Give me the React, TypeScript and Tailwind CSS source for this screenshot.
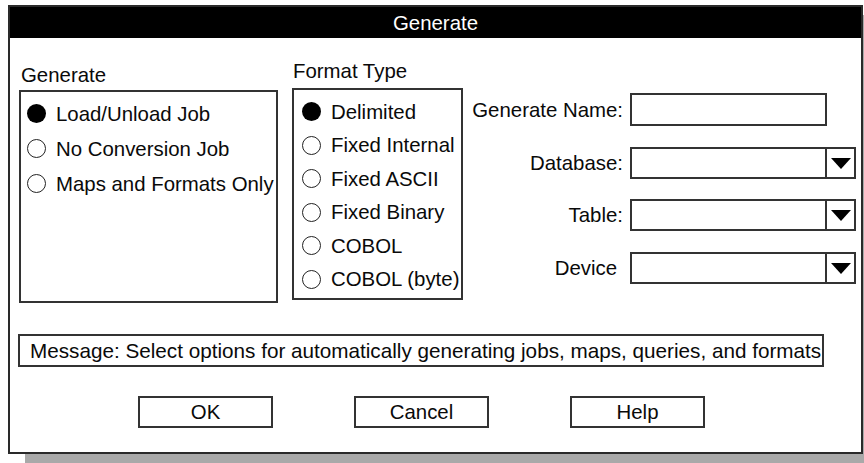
import React from "react";

const font = { fontFamily: '"Liberation Sans", Arial, sans-serif' };

function Radio({ label, checked }: { label: string; checked?: boolean }) {
  return (
    <div className="flex items-center gap-[10px] whitespace-nowrap">
      <span
        className={
          checked
            ? "w-[19px] h-[19px] rounded-full bg-black shrink-0"
            : "w-[19px] h-[19px] rounded-full border-[1.5px] border-[#222] bg-white shrink-0"
        }
      />
      <span>{label}</span>
    </div>
  );
}

function Select() {
  return (
    <div className="flex w-[226px] h-[32px] border-2 border-[#333] bg-white">
      <div className="flex-1" />
      <div className="w-[29px] border-l-2 border-[#333] flex items-center justify-center">
        <svg width="20" height="11" viewBox="0 0 20 11">
          <polygon points="0,0 20,0 10,11" fill="#000" />
        </svg>
      </div>
    </div>
  );
}

function Button({ label }: { label: string }) {
  return (
    <div className="w-[135px] h-[32px] border-2 border-[#333] flex items-center justify-center">
      {label}
    </div>
  );
}

export default function App() {
  return (
    <div
      className="w-[864px] h-[463px] bg-white overflow-hidden pl-[8px] pt-[5px] text-[20.4px] leading-[24px] text-[#0a0a0a]"
      style={font}
    >
      <div className="w-[855px] h-[449px] border-2 border-[#2a2a2a] bg-white shadow-[17px_10px_0_#a9a9a9] flex flex-col">
        <div className="h-[31px] bg-black text-white flex items-center justify-center">
          Generate
        </div>

        <div className="flex items-start">
          {/* Generate group */}
          <div className="ml-[9px] mt-[25px]">
            <div className="mb-[3px] pl-[2px]">Generate</div>
            <div className="w-[259px] h-[213px] border-2 border-[#333] pt-[4px] pl-[6px]">
              <div className="h-[35px] flex items-center">
                <Radio label="Load/Unload Job" checked />
              </div>
              <div className="h-[35px] flex items-center">
                <Radio label="No Conversion Job" />
              </div>
              <div className="h-[35px] flex items-center">
                <Radio label="Maps and Formats Only" />
              </div>
            </div>
          </div>

          {/* Format type group */}
          <div className="ml-[14px] mt-[21px]">
            <div className="mb-[5px] pl-[1px]">Format Type</div>
            <div className="w-[171px] h-[212px] border-2 border-[#333] pt-[5px] pl-[8px]">
              {[
                ["Delimited", true],
                ["Fixed Internal", false],
                ["Fixed ASCII", false],
                ["Fixed Binary", false],
                ["COBOL", false],
                ["COBOL (byte)", false],
              ].map(([l, c]) => (
                <div key={l as string} className="h-[33.5px] flex items-center">
                  <Radio label={l as string} checked={c as boolean} />
                </div>
              ))}
            </div>
          </div>

          {/* Fields */}
          <div className="ml-px mt-[55px] w-[392px] flex flex-col">
            <div className="flex items-center gap-[7px]">
              <div className="w-[159px] text-right whitespace-nowrap">Generate Name:</div>
              <div className="w-[197px] h-[33px] border-2 border-[#333]" />
            </div>
            <div className="flex items-center gap-[7px] mt-[21px]">
              <div className="w-[159px] text-right">Database:</div>
              <Select />
            </div>
            <div className="flex items-center gap-[7px] mt-[20px]">
              <div className="w-[159px] text-right">Table:</div>
              <Select />
            </div>
            <div className="flex items-center gap-[7px] mt-[21px]">
              <div className="w-[159px] text-right pr-[6px]">Device</div>
              <Select />
            </div>
          </div>
        </div>

        <div className="ml-[8px] mt-[31px] w-[806px] h-[33px] border-2 border-[#333] flex items-center pl-[10px] whitespace-nowrap text-[20.7px]">
          Message: Select options for automatically generating jobs, maps, queries, and formats
        </div>

        <div className="flex pl-[128px] gap-[81px] mt-[29px]">
          <Button label="OK" />
          <Button label="Cancel" />
          <Button label="Help" />
        </div>
      </div>
    </div>
  );
}
